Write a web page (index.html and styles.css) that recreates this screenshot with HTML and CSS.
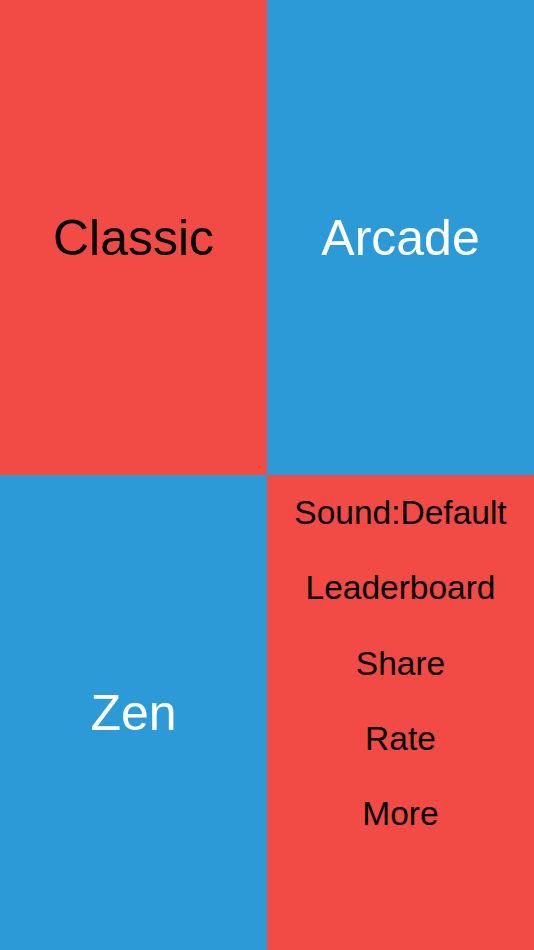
FILE: index.html
```
<!DOCTYPE html>
<html lang="en">
<head>
<meta charset="utf-8">
<title>Menu</title>
<link rel="stylesheet" href="styles.css">
</head>
<body>
<main class="grid">
  <div class="cell red dark-text"><span class="mode">Classic</span></div>
  <div class="cell blue light-text"><span class="mode">Arcade</span></div>
  <div class="cell blue light-text"><span class="mode">Zen</span></div>
  <nav class="cell red menu">
    <div class="menu-item">Sound:Default</div>
    <div class="menu-item">Leaderboard</div>
    <div class="menu-item">Share</div>
    <div class="menu-item">Rate</div>
    <div class="menu-item">More</div>
  </nav>
</main>
</body>
</html>
```
FILE: styles.css
```
html, body {
  margin: 0;
  padding: 0;
}
body {
  font-family: "Liberation Sans", Arial, Helvetica, sans-serif;
  width: 534px;
  height: 950px;
  overflow: hidden;
}
.grid {
  display: grid;
  grid-template-columns: 267px 267px;
  grid-template-rows: 475px 475px;
  width: 534px;
  height: 950px;
}
.cell {
  display: flex;
  align-items: center;
  justify-content: center;
}
.red { background: #F24A45; }
.blue { background: #2D9AD8; }
.dark-text { color: #000; }
.light-text { color: #fff; }
.mode {
  font-size: 50px;
  line-height: 1;
}
.menu {
  flex-direction: column;
  justify-content: flex-start;
  color: #000;
}
.menu-item {
  height: 75.25px;
  line-height: 75.25px;
  font-size: 33.5px;
  text-align: center;
  width: 100%;
}
```
